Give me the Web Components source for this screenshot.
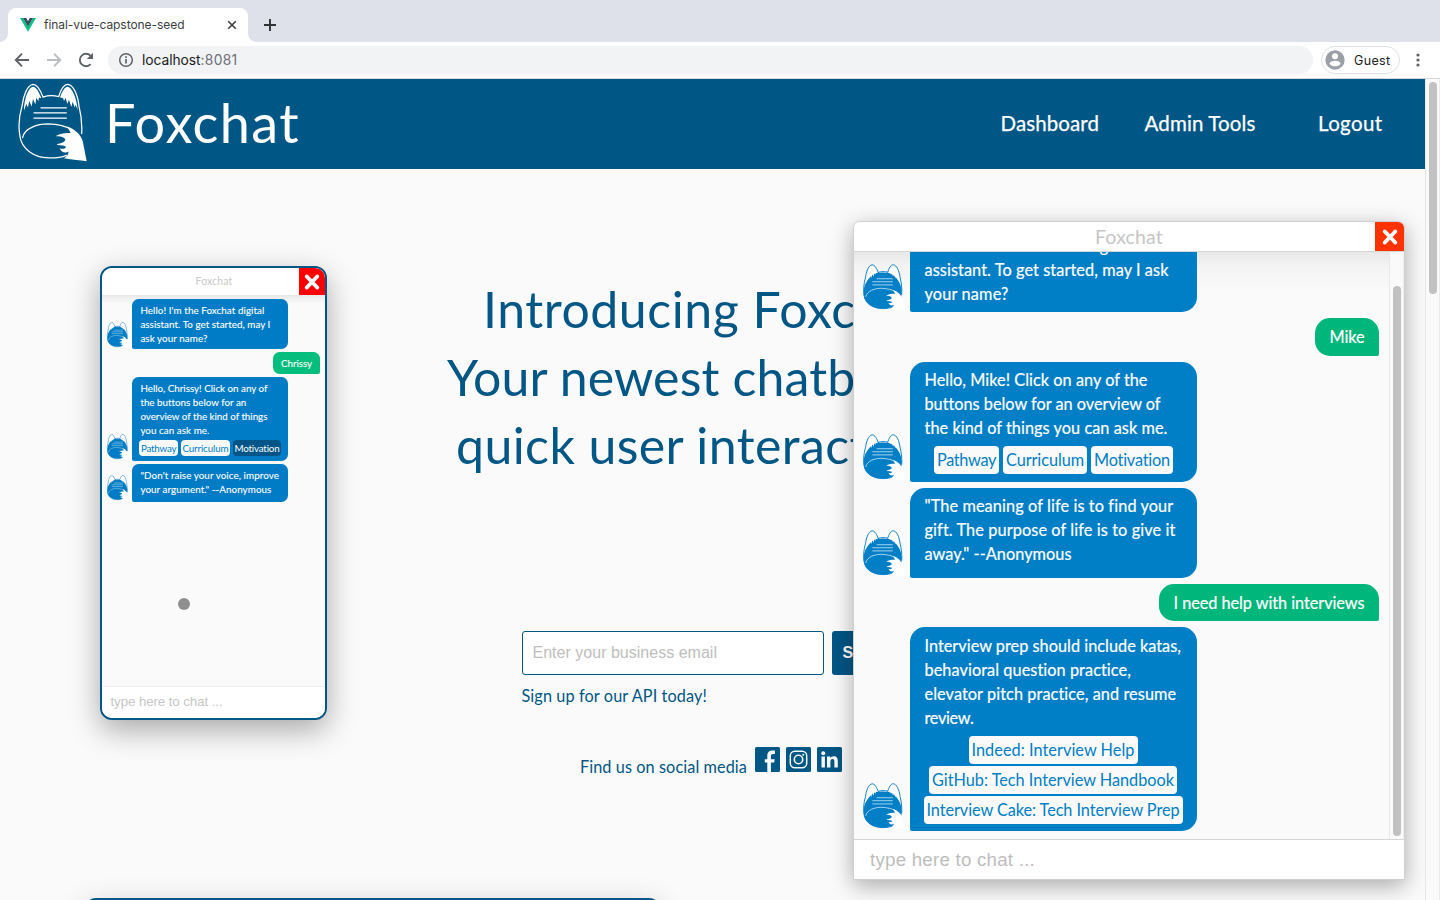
<!DOCTYPE html>
<html lang="en">
<head>
<meta charset="utf-8">
<title>final-vue-capstone-seed</title>
<style>
html,body{margin:0;height:100%;overflow:hidden;background:#fafafa}
body{font-family:Lato,"Liberation Sans",sans-serif}
</style>
</head>
<body>
<app-window></app-window>

<template id="t-window">
<style>
:host{display:flex;flex-direction:column;width:1440px;height:900px;overflow:hidden}
.view{display:flex;flex:1;min-height:0}
.page{flex:1;min-width:0;position:relative;overflow:hidden;background:#fafafa}
chat-widget{position:absolute;left:853px;top:142px}
page-scroll{flex:none}
</style>
<browser-chrome></browser-chrome>
<div class="view">
  <div class="page">
    <site-header></site-header>
    <hero-section></hero-section>
    <chat-widget></chat-widget>
  </div>
  <page-scroll></page-scroll>
</div>
</template>

<template id="t-chrome">
<style>
:host{display:block;font-family:Inter,Roboto,sans-serif;color:#3c4043;flex:none}
.strip{height:42px;background:#dee1e9;display:flex;padding-left:8px;box-sizing:border-box}
.tab{margin-top:8px;width:240px;height:34px;background:#fff;border-radius:8px 8px 0 0;display:flex;align-items:center;padding:0 11px 0 12px;box-sizing:border-box;position:relative}
.tab:before,.tab:after{content:"";position:absolute;bottom:0;width:8px;height:8px}
.tab:before{left:-8px;background:radial-gradient(circle at 0 0,transparent 7.5px,#fff 8px)}
.tab:after{right:-8px;background:radial-gradient(circle at 100% 0,transparent 7.5px,#fff 8px)}
.tab fit-line{font-size:12px;margin:-2px 0 0 8px;flex:1}
.plus{margin:18px 0 0 15px}
.bar{height:36px;background:#fff;border-bottom:1px solid #d5d7db;display:flex;align-items:center;padding-left:14px}
.bar svg{flex:none}
.url{height:28px;width:1205px;margin-left:14px;border-radius:14px;background:#f1f3f4;display:flex;align-items:center;padding-left:10px;box-sizing:border-box;font-size:13.800px;color:#202124}
.url svg{margin-right:8px}.url .port{color:#6b6f74}
.guest{height:26px;border:1px solid #dfe1e5;border-radius:14px;margin-left:8px;display:flex;align-items:center;font-size:12.500px;color:#202124;padding-left:3px;width:74px}
.guest svg{margin-right:9px}
.dots{margin-left:15px}
svg{display:block}
</style>
<div class="strip">
  <div class="tab">
    <svg width="16" height="14" viewBox="0 0 16 14"><path fill="#0fbf83" d="M0 0h3.300L8 8.200 12.700 0H16L8 13.700z"/><path fill="#34495e" d="M3.200 0H6.200L8 3.200 9.800 0h3L8 8.400z"/></svg>
    <fit-line w="140.500">final-vue-capstone-seed</fit-line>
    <svg width="10" height="10" viewBox="0 0 10 10"><path d="M1.200 1.200l7.600 7.600M8.800 1.200L1.200 8.800" stroke="#3c4043" stroke-width="1.600"/></svg>
  </div>
  <svg class="plus" width="14" height="14" viewBox="0 0 14 14"><path d="M7 1v12M1 7h12" stroke="#303336" stroke-width="1.900"/></svg>
</div>
<div class="bar">
  <svg width="16" height="16" viewBox="0 0 16 16" fill="none" stroke="#5f6368" stroke-width="1.900"><path d="M15 8H2.500M8 1.700L1.800 8 8 14.300"/></svg>
  <svg style="margin-left:16px" width="16" height="16" viewBox="0 0 16 16" fill="none" stroke="#babcbf" stroke-width="1.900"><path d="M1 8h12.500M8 1.700L14.200 8 8 14.300"/></svg>
  <svg style="margin-left:16px" width="16" height="16" viewBox="0 0 16 16"><path d="M12.600 12.200A6.200 6.200 0 1 1 12.600 3.800" fill="none" stroke="#5f6368" stroke-width="1.900"/><path d="M15 .8v6.200H8.800z" fill="#5f6368"/></svg>
  <div class="url"><svg width="16" height="16" viewBox="0 0 16 16"><circle cx="8" cy="8" r="6.300" fill="none" stroke="#5f6368" stroke-width="1.500"/><path d="M8 7v4.500M8 4.300v1.700" stroke="#5f6368" stroke-width="1.700"/></svg><fit-line w="58.500">localhost</fit-line><fit-line class="port" w="37">:8081</fit-line></div>
  <div class="guest"><svg width="20" height="20" viewBox="0 0 20 20"><circle cx="10" cy="10" r="9.700" fill="#9aa0a6"/><circle cx="10" cy="6.300" r="3" fill="#fff"/><path d="M4.300 13.400C5 11.300 8 10.700 10 10.700s5 .6 5.700 2.700c-1.300 1.900-3.300 2.900-5.700 2.900s-4.400-1-5.700-2.900z" fill="#fff"/></svg><fit-line w="36.500">Guest</fit-line></div>
  <svg class="dots" width="6" height="16" viewBox="0 0 6 16" fill="#5f6368"><circle cx="3" cy="3" r="1.600"/><circle cx="3" cy="8" r="1.600"/><circle cx="3" cy="13" r="1.600"/></svg>
</div>
</template>

<template id="t-scroll">
<style>
:host{display:block;width:15px;box-sizing:border-box;border-left:1px solid #e6e6e6;border-right:1px solid #ececec;background:#fafafa;padding:3px 0 0 3px}
i{display:block;width:8px;height:212px;border-radius:4px;background:#c1c1c1}
</style><i></i>
</template>

<template id="t-header">
<style>
:host{display:flex;height:90px;background:#005684;color:#fff;align-items:flex-start}
fox-icon{width:69px;height:79px;margin:4px 1px 0 18px;--line:#fff;--body:none;--detail:#fff;--inner:#fff;--tail:#fff;--sw:3.8px}
.name{font-size:54px;line-height:64px;margin:12px 0 0 17px}
nav{display:flex;margin-left:auto;padding-right:42.500px;font-size:20.500px;line-height:30px;margin-top:29px;-webkit-text-stroke:.25px #fff}
nav fit-line+fit-line{margin-left:45.500px}nav fit-line+fit-line+fit-line{margin-left:62.500px}
</style>
<fox-icon></fox-icon><fit-line class="name" w="195">Foxchat</fit-line>
<nav><fit-line w="98.500">Dashboard</fit-line><fit-line w="111">Admin Tools</fit-line><fit-line w="64.500">Logout</fit-line></nav>
</template>

<template id="t-fox">
<style>:host{display:block;flex:none}svg{display:block;width:100%;height:100%}.line{stroke:var(--line);stroke-width:var(--sw)}.detail{stroke:var(--detail);stroke-width:var(--sw)}</style>
<svg viewBox="55 251 207 236" preserveAspectRatio="none" fill="none" stroke-linecap="round" stroke-linejoin="round">
<path d="M60 372C66 346 82 322 102 305C118 290 187 290 203 305C223 322 239 346 244 372C249 400 244 425 232 440C215 465 180 475 153 475C105 475 64 450 59 410C57 395 58 385 60 372Z" style="fill:var(--body)"/>
<path class="line" d="M130 293C123 274 113 255 100 255C82 257 71 290 67 320C58 350 57 385 60 405C64 450 105 475 153 475C175 475 190 471 200 467M246 402C248 370 243 340 238 320C234 285 220 255 204 255C191 255 183 272 177 292M130 293C145 288 163 288 177 292"/>
<path d="M73 333C73 300 86 263 100 262C111 263 118 280 125 296L118 295L116 305L110 296L107 315L100 299L96 321L89 305L85 324L80 314ZM234 333C233 300 217 263 204 262C194 263 187 278 181 294L190 296L193 305L198 296L203 314L208 301L215 323L219 307L225 324L228 316Z" style="fill:var(--inner)"/>
<path class="detail" d="M124 325H200M103 340H200M103 356H200"/>
<path class="detail" d="M69 414C74 385 115 373 145 373C175 374 200 380 220 392"/>
<path d="M203 381C226 390 244 404 250 428L261 485C240 482 220 480 193 476C201 472 206 465 207 456C197 462 184 458 180 446C188 449 196 448 199 442C193 435 179 441 171 434C184 431 196 428 197 420C193 411 180 410 168 410C180 401 199 400 213 400Z" style="fill:var(--tail)"/>
</svg>
</template>

<template id="t-hero">
<style>
:host{display:block;color:#005684;height:731px}
.grid{display:grid;grid-template-columns:327px 1fr;height:729px}
.left{padding:97px 0 0 100px}
.copy{padding-top:106px}
h1{margin:0;font-weight:400;font-size:50px;line-height:68px}
h1 fit-line{display:block}
.form{display:flex;margin:152px 0 0 195px;height:44px}
.in{box-sizing:border-box;width:302px;border:1px solid #005684;border-radius:3px;background:#fff;padding-left:9.500px;line-height:42px;font-family:"Liberation Sans",Arial,sans-serif;font-size:16px;color:#bebebe}
.btn{margin-left:8px;width:100px;border-radius:3px;background:#005684;color:#fff;font:bold 16px/43px "Liberation Sans",Arial,sans-serif;padding-left:10.500px;box-sizing:border-box}
.cap{font-size:16.300px;line-height:20px;margin:10.500px 0 0 194.500px}
.social{display:flex;margin:41.500px 0 0 253px;height:25px}
.social fit-line{font-size:16.300px;line-height:20px;margin:10px 8px 0 0}
.social svg{width:25px;height:25px;margin-right:6px}
.card{height:40px;width:577px;margin-left:84px;box-sizing:border-box;border:2px solid #005684;border-radius:12px;background:#fff;box-shadow:0 8px 30px rgba(0,0,0,.2)}
</style>
<div class="grid">
 <div class="left"><demo-phone></demo-phone></div>
 <div class="copy">
  <h1><fit-line w="269.500" n="12" style="margin-left:156px">Introducing Foxchat</fit-line><fit-line w="285.500" n="12" style="margin-left:120px">Your newest chatbot</fit-line><fit-line w="393.500" n="18" style="margin-left:129px">quick user interact</fit-line></h1>
  <div class="form"><div class="in"><fit-line w="184.500">Enter your business email</fit-line></div><div class="btn">Submit</div></div>
  <fit-line class="cap" w="185.500">Sign up for our API today!</fit-line>
  <div class="social"><fit-line w="167">Find us on social media</fit-line>
   <svg viewBox="0 0 25 25"><rect width="25" height="25" rx="1.500" fill="#005684"/><path fill="#fafafa" d="M12.300 25v-9.400H9.800v-3.400h2.500V8.700c0-3.200 1.800-5.300 5-5.300h2.600v3.500h-1.800c-1.600 0-2.200.7-2.200 2.100v3.200h3.800l-.5 3.400h-3.300V25z"/></svg>
   <svg viewBox="0 0 25 25" fill="none" stroke="#fafafa"><rect width="25" height="25" rx="1.500" fill="#005684" stroke="none"/><rect x="4.300" y="4.300" width="16.400" height="16.400" rx="4.500" stroke-width="1.500"/><circle cx="12.500" cy="12.500" r="4.200" stroke-width="1.600"/><circle cx="17.300" cy="7.700" r="1" fill="#fafafa" stroke="none"/></svg>
   <svg viewBox="0 0 25 25"><rect width="25" height="25" rx="1.500" fill="#005684"/><g fill="#fafafa"><circle cx="6.200" cy="6.300" r="2"/><path d="M4.500 9.600h3.400v11H4.500zM10 9.600h3.200v1.600c.7-1.200 1.900-1.900 3.500-1.900 3.200 0 4.100 2 4.100 5v6.300h-3.400V15c0-1.600-.3-2.900-1.900-2.900-1.700 0-2.100 1.300-2.100 2.900v5.600H10z"/></g></svg>
  </div>
 </div>
</div>
<div class="card"></div>
</template>

<template id="t-phone">
<style>
:host{display:flex;flex-direction:column;width:227px;height:454px;box-sizing:border-box;border:2px solid #005684;border-radius:12px;overflow:hidden;background:#fafafa;box-shadow:0 10px 30px rgba(0,0,0,.33);position:relative;font-size:9.800px}
.head{height:27px;background:#fff;display:flex;justify-content:center;align-items:center;color:#c9c9c9;font-size:10.500px;position:relative;flex:none}
.head fit-line{margin:-1px 0 0 1px}
close-button{position:absolute;right:0;top:0;width:26px;height:27px;background:#f00}
.log{flex:1;display:flex;flex-direction:column;gap:3px;padding-top:4px;background:linear-gradient(#e9e9e9,#fafafa 9px)}
chat-bubble{--lh:14.200px;--pad:8px;--radius:6.500px;--fw:22px;--fh:26px;--fl:5px;--bl:30.400px;--w:156px;--edge:5px;--blue:#007cc6;--green:#05bd7c;-webkit-text-stroke:.1px}
chat-chip{height:16px;line-height:16px;padding:0 1.500px}
.chips{display:flex;gap:3px;margin:3px 0 0 -1px}
.input{height:31px;border-top:1px solid #eee;background:#fff;color:#c6c6c6;font:13.300px/30px "Liberation Sans",Arial,sans-serif;padding-left:8.500px;flex:none}
.cursor{position:absolute;left:76px;top:330px;width:12px;height:12px;border-radius:50%;background:#8f8f8f}
</style>
<div class="head"><fit-line w="37">Foxchat</fit-line><close-button></close-button></div>
<div class="log">
<chat-bubble style="--h:50px;--pt:4px"><fit-line w="124">Hello! I'm the Foxchat digital</fit-line><fit-line w="130">assistant. To get started, may I</fit-line><fit-line w="67">ask your name?</fit-line></chat-bubble>
<chat-bubble mine style="--h:22px;--w:47px;--pt:4px"><fit-line w="31">Chrissy</fit-line></chat-bubble>
<chat-bubble style="--h:84px;--pt:3.500px"><fit-line w="127">Hello, Chrissy! Click on any of</fit-line><fit-line w="105.500">the buttons below for an</fit-line><fit-line w="127">overview of the kind of things</fit-line><fit-line w="69">you can ask me.</fit-line><div class="chips"><chat-chip><fit-line w="35.500">Pathway</fit-line></chat-chip><chat-chip><fit-line w="46">Curriculum</fit-line></chat-chip><chat-chip dark><fit-line w="45.500">Motivation</fit-line></chat-chip></div></chat-bubble>
<chat-bubble style="--h:38px;--pt:3.500px"><fit-line w="138.500">"Don't raise your voice, improve</fit-line><fit-line w="131">your argument." --Anonymous</fit-line></chat-bubble>
</div>
<div class="input"><fit-line w="112">type here to chat ...</fit-line></div>
<div class="cursor"></div>
</template>

<template id="t-close">
<style>:host{display:flex;align-items:center;justify-content:center}svg{width:16px;height:16px}</style>
<svg viewBox="0 0 16 16"><path d="M2.800 2.500l10.400 11M13.200 2.500L2.800 13.500" stroke="#fff" stroke-width="3.900" stroke-linecap="round"/></svg>
</template>

<template id="t-bubble">
<style>
:host{display:flex;align-items:flex-end;flex:none;height:var(--h);position:relative;color:#fff;-webkit-text-stroke:.2px}
fox-icon{width:var(--fw);height:var(--fh);margin:0 calc(var(--bl) - var(--fl) - var(--fw)) 1px var(--fl);--line:#0a7fc8;--body:var(--blue);--detail:#a9d6f0;--inner:#fff;--tail:#fff;--sw:4.8px}
.b{box-sizing:border-box;width:var(--w);height:var(--h);background:var(--blue);border-radius:var(--radius) var(--radius) var(--radius) 2px;padding:var(--pt) 0 0 var(--pad);line-height:var(--lh)}
:host([mine]){justify-content:flex-end;padding-right:var(--edge)}
:host([mine]) fox-icon{display:none}
:host([mine]) .b{background:var(--green);border-radius:var(--radius) var(--radius) 2px var(--radius)}
::slotted(fit-line){display:block}
</style>
<fox-icon></fox-icon><div class="b"><slot></slot></div>
</template>

<template id="t-chip">
<style>:host{display:block;box-sizing:border-box;width:max-content;background:#fafafa;color:#007ec6;border-radius:4px;height:28px;line-height:27px;padding:0 3px;-webkit-text-stroke:0}:host([dark]){background:#005588;color:#fff}</style><slot></slot>
</template>

<template id="t-widget">
<style>
:host{display:flex;flex-direction:column;width:552px;height:659px;box-sizing:border-box;border:1px solid #d0d0d0;border-radius:7px 7px 0 0;background:#fafafa;box-shadow:0 6px 22px rgba(0,0,0,.32);font-size:16.300px}
.head{height:29px;flex:none;background:#fff;border-bottom:1px solid #d6d6d6;border-radius:6px 6px 0 0;display:flex;justify-content:center;position:relative;font-size:19.500px;line-height:29px;color:#c6c6c6}
close-button{position:absolute;right:0;top:0;width:29px;height:29px;background:#ff3200;border-radius:0 6px 0 0}
.body{flex:1;display:flex;min-height:0}
.log{flex:1;display:flex;flex-direction:column;justify-content:flex-end;overflow:hidden;padding-bottom:8px;gap:6px;background:linear-gradient(#e8e8e8,#f4f4f4 15px,#fafafa 40px)}
.bar{width:15px;box-sizing:border-box;border-left:1px solid #e8e8e8;border-right:1px solid #eee;padding:34px 0 0 3px}
.bar i{display:block;width:8px;height:550px;border-radius:4px;background:#c1c1c1}
chat-bubble{--lh:24px;--pad:14.500px;--radius:15px;--fw:42px;--fh:47px;--fl:9px;--bl:56px;--w:287px;--edge:10px;--blue:#007ec6;--green:#00b67a;--pt:6px}
.chips{display:flex;gap:4px;margin:6px 0 0 9.500px}
.links{display:flex;flex-direction:column;gap:2px;margin:6px 0 0 -1px;width:259px;align-items:center}
.input{height:39px;flex:none;border-top:1px solid #d6d6d6;background:#fff;color:#bdbdbd;font:18.700px/39px "Liberation Sans",Arial,sans-serif;padding-left:16px}
</style>
<div class="head"><fit-line w="68">Foxchat</fit-line><close-button></close-button></div>
<div class="body"><div class="log">
<chat-bubble style="--h:84px;--pt:6px"><fit-line w="206">Hello! I'm the Foxchat digital</fit-line><fit-line w="244">assistant. To get started, may I ask</fit-line><fit-line w="84">your name?</fit-line></chat-bubble>
<chat-bubble mine style="--h:38px;--w:64px;--pt:7px"><fit-line w="35">Mike</fit-line></chat-bubble>
<chat-bubble style="--h:120px"><fit-line w="223">Hello, Mike! Click on any of the</fit-line><fit-line w="235.500">buttons below for an overview of</fit-line><fit-line w="243">the kind of things you can ask me.</fit-line><div class="chips"><chat-chip><fit-line w="59">Pathway</fit-line></chat-chip><chat-chip><fit-line w="78">Curriculum</fit-line></chat-chip><chat-chip><fit-line w="76.500">Motivation</fit-line></chat-chip></div></chat-bubble>
<chat-bubble style="--h:90px"><fit-line w="248.500">"The meaning of life is to find your</fit-line><fit-line w="250.500">gift. The purpose of life is to give it</fit-line><fit-line w="147">away." --Anonymous</fit-line></chat-bubble>
<chat-bubble mine style="--h:37px;--w:220px;--pt:7px"><fit-line w="191">I need help with interviews</fit-line></chat-bubble>
<chat-bubble style="--h:204px;--pt:7px"><fit-line w="256.500">Interview prep should include katas,</fit-line><fit-line w="207">behavioral question practice,</fit-line><fit-line w="252">elevator pitch practice, and resume</fit-line><fit-line w="49">review.</fit-line><div class="links"><chat-chip><fit-line w="163">Indeed: Interview Help</fit-line></chat-chip><chat-chip><fit-line w="242">GitHub: Tech Interview Handbook</fit-line></chat-chip><chat-chip><fit-line w="253">Interview Cake: Tech Interview Prep</fit-line></chat-chip></div></chat-bubble>
</div><div class="bar"><i></i></div></div>
<div class="input"><fit-line w="165">type here to chat ...</fit-line></div>
</template>

<script>
const define = (tag, id) => customElements.define(tag, class extends HTMLElement {
  constructor() {
    super();
    this.attachShadow({mode: 'open'}).append(document.getElementById(id).content.cloneNode(true));
  }
});
define('app-window', 't-window');
define('browser-chrome', 't-chrome');
define('page-scroll', 't-scroll');
define('site-header', 't-header');
define('hero-section', 't-hero');
define('demo-phone', 't-phone');
define('chat-widget', 't-widget');
define('chat-bubble', 't-bubble');
define('chat-chip', 't-chip');
define('close-button', 't-close');
define('fox-icon', 't-fox');

// A single line of text tracked out to a given width; n limits the measure to the first n characters.
customElements.define('fit-line', class extends HTMLElement {
  constructor() {
    super();
    this.attachShadow({mode: 'open'}).innerHTML = '<style>:host{display:block;white-space:pre;width:max-content}</style><slot></slot>';
  }
  connectedCallback() {
    const text = this.firstChild;
    const n = +this.getAttribute('n') || text.length;
    const range = document.createRange();
    range.setStart(text, 0);
    range.setEnd(text, n);
    const natural = range.getBoundingClientRect().width;
    this.style.letterSpacing = ((+this.getAttribute('w') - natural) / n).toFixed(4) + 'px';
  }
});
</script>
</body>
</html>
